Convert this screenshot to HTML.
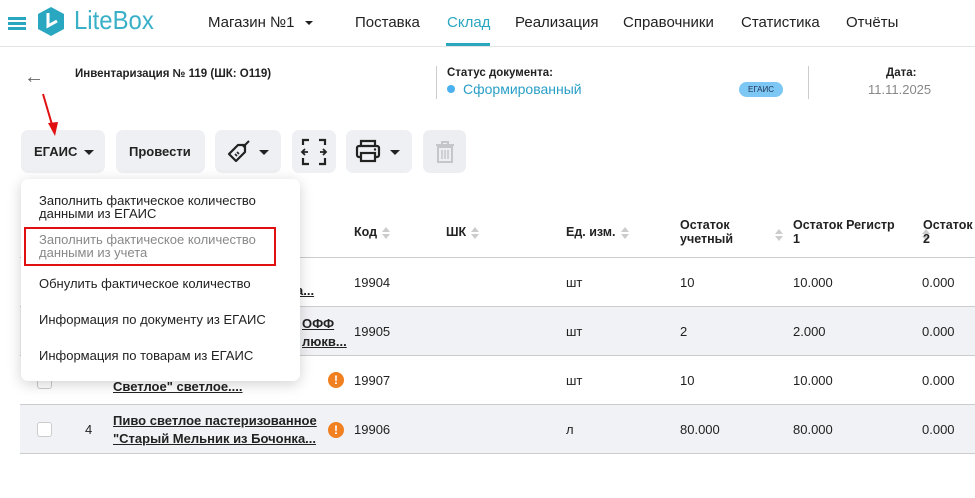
<!DOCTYPE html>
<html><head><meta charset="utf-8">
<style>
*{margin:0;padding:0;box-sizing:border-box}
body{width:975px;height:498px;overflow:hidden;background:#fff;font-family:"Liberation Sans",sans-serif;color:#222;position:relative}
.a{position:absolute;white-space:nowrap}
.nav{font-size:15px;top:14px;color:#222}
.btn{position:absolute;top:130px;height:43px;background:#eef0f3;border-radius:7px}
.caret{display:inline-block;width:0;height:0;border-left:5px solid transparent;border-right:5px solid transparent;border-top:5px solid #222;vertical-align:middle}
.th{font-size:12.5px;font-weight:bold;color:#222;position:absolute}
.sort{display:inline-block;width:8px;height:12px;position:relative;vertical-align:middle;margin-left:5px}
.sort:before{content:"";position:absolute;top:0;left:0;border-left:4px solid transparent;border-right:4px solid transparent;border-bottom:5px solid #ccc}
.sort:after{content:"";position:absolute;bottom:0;left:0;border-left:4px solid transparent;border-right:4px solid transparent;border-top:5px solid #ccc}
.row{position:absolute;left:20px;width:955px;height:49px;border-bottom:1px solid #ccc}
.td{position:absolute;font-size:13px;color:#222}
.name{position:absolute;left:113px;font-size:13px;font-weight:bold;text-decoration:underline;line-height:18px;color:#222}
.ex{position:absolute;left:328px;width:16px;height:16px;border-radius:50%;background:#f08020;color:#fff;font-weight:bold;font-size:12px;text-align:center;line-height:16px}
.cb{position:absolute;left:37px;width:15px;height:15px;border:1px solid #ccc;border-radius:3px;background:#fff}
.mi{position:absolute;left:39px;font-size:13px;color:#222;line-height:13px}
</style></head><body>
<div class="a" style="left:8px;top:17px;width:18px;height:3px;background:#2aa7c0;box-shadow:0 5px 0 #2aa7c0,0 10px 0 #2aa7c0"></div>
<svg class="a" style="left:36px;top:6px" width="30" height="31" viewBox="0 0 30 31"><path d="M15 1 L28 8 L28 23 L15 30 L2 23 L2 8 Z" fill="#2aa7c0"/><path d="M12 7 L12 20 L21 15" fill="none" stroke="#fff" stroke-width="3"/></svg>
<div class="a" style="left:74px;top:5px;font-size:26px;color:#3ab0c8;transform:scaleX(0.92);transform-origin:left">LiteBox</div>
<div class="a nav" style="left:208px">Магазин №1 <span class="caret" style="margin-left:6px;border-width:4px 4px 0"></span></div>
<div class="a nav" style="left:355px">Поставка</div>
<div class="a nav" style="left:447px;color:#2aa7c0">Склад</div>
<div class="a" style="left:446px;top:43px;width:44px;height:3px;background:#2aa7c0"></div>
<div class="a nav" style="left:515px">Реализация</div>
<div class="a nav" style="left:623px">Справочники</div>
<div class="a nav" style="left:741px">Статистика</div>
<div class="a nav" style="left:846px">Отчёты</div>
<div class="a" style="left:0;top:46px;width:975px;height:1px;background:#e3e3e3"></div>
<div class="a" style="left:24px;top:66px;font-size:20px;color:#666">&#8592;</div>
<div class="a" style="left:75px;top:68px;font-size:11.5px;font-weight:bold">Инвентаризация № 119 (ШК: О119)</div>
<div class="a" style="left:436px;top:66px;width:1px;height:33px;background:#ccc"></div>
<div class="a" style="left:447px;top:67px;font-size:11.5px;font-weight:bold">Статус документа:</div>
<div class="a" style="left:447px;top:85px;width:8px;height:8px;border-radius:50%;background:#4ab0ef"></div>
<div class="a" style="left:463px;top:81px;font-size:14px;color:#2a9fc6">Сформированный</div>
<div class="a" style="left:739px;top:82px;width:44px;height:15px;border-radius:8px;background:#7cc7f3;font-size:8px;color:#235;text-align:center;line-height:15px">ЕГАИС</div>
<div class="a" style="left:808px;top:66px;width:1px;height:33px;background:#ccc"></div>
<div class="a" style="left:886px;top:67px;font-size:11.5px;font-weight:bold">Дата:</div>
<div class="a" style="left:868px;top:82px;font-size:13px;color:#888">11.11.2025</div>
<div class="btn" style="left:21px;width:84px"><span class="a" style="left:13px;top:14px;font-size:13px;font-weight:bold">ЕГАИС</span><span class="caret a" style="left:63px;top:20px"></span></div>
<div class="btn" style="left:116px;width:89px"><span class="a" style="left:13px;top:14px;font-size:13px;font-weight:bold">Провести</span></div>
<div class="btn" style="left:215px;width:66px"><svg class="a" style="left:10px;top:9px" width="26" height="26" viewBox="0 0 26 26"><path d="M4 15 L13 6 L20 6 L20 13 L11 22 Z" fill="none" stroke="#222" stroke-width="2.2" stroke-linejoin="round"/><path d="M18 8 L24 2" stroke="#222" stroke-width="2"/><path d="M10 15 L12 17 M12 13 L14 15" stroke="#222" stroke-width="1.6"/></svg><span class="caret a" style="left:44px;top:20px"></span></div>
<div class="btn" style="left:292px;width:44px"><svg class="a" style="left:8px;top:7px" width="28" height="30" viewBox="0 0 28 30"><path d="M3 8 V3 H9 M19 3 H25 V8 M3 21 V27 H9 M19 27 H25 V21" fill="none" stroke="#222" stroke-width="2.2"/><path d="M2 15 H8 M5 12 L2 15 L5 18 M26 15 H20 M23 12 L26 15 L23 18" fill="none" stroke="#222" stroke-width="1.8"/></svg></div>
<div class="btn" style="left:346px;width:66px"><svg class="a" style="left:9px;top:9px" width="26" height="24" viewBox="0 0 26 24"><path d="M6 6 V2 H20 V6" fill="none" stroke="#222" stroke-width="2.2"/><rect x="2" y="7" width="22" height="11" rx="2" fill="none" stroke="#222" stroke-width="2.2"/><rect x="6" y="14" width="14" height="8" fill="#eef0f3" stroke="#222" stroke-width="2.2"/><circle cx="20" cy="10.5" r="1.2" fill="#222"/></svg><span class="caret a" style="left:44px;top:20px"></span></div>
<div class="btn" style="left:423px;width:43px;background:#eceef1"><svg class="a" style="left:12px;top:11px" width="20" height="22" viewBox="0 0 20 22"><path d="M1 4 H19 M7 4 V1 H13 V4" fill="none" stroke="#c4c6ca" stroke-width="2"/><rect x="3" y="6" width="14" height="15" fill="none" stroke="#c4c6ca" stroke-width="2"/><path d="M7 9 V18 M10 9 V18 M13 9 V18" stroke="#c4c6ca" stroke-width="1.5"/></svg></div>
<svg class="a" style="left:38px;top:92px" width="24" height="48"><line x1="5" y1="2" x2="15" y2="36" stroke="#e01010" stroke-width="2"/><path d="M10 31 L17 44 L20 30 Z" fill="#e01010"/></svg>
<div class="th" style="left:354px;top:225px">Код<span class="sort"></span></div>
<div class="th" style="left:446px;top:225px">ШК<span class="sort"></span></div>
<div class="th" style="left:566px;top:225px">Ед. изм.<span class="sort"></span></div>
<div class="th" style="left:680px;top:218px;line-height:14px">Остаток<br>учетный</div>
<div class="a sort" style="left:770px;top:226px"></div>
<div class="th" style="left:793px;top:218px;line-height:14px">Остаток Регистр<br>1</div>
<div class="a sort" style="left:900px;top:226px"></div>
<div class="th" style="left:923px;top:218px;line-height:14px">Остаток<br>2</div>
<div class="a" style="left:20px;top:257px;width:955px;height:1px;background:#ccc"></div>
<div class="row" style="top:258px;background:#fff"><span class="name" style="top:24px;left:276px">а...</span><span class="td" style="left:334px;top:17px">19904</span><span class="td" style="left:546px;top:17px">шт</span><span class="td" style="left:660px;top:17px">10</span><span class="td" style="left:773px;top:17px">10.000</span><span class="td" style="left:902px;top:17px">0.000</span></div>
<div class="row" style="top:307px;background:#f1f2f5"><span class="name" style="top:8px;left:282px">ОФФ<br>люкв...</span><span class="td" style="left:334px;top:17px">19905</span><span class="td" style="left:546px;top:17px">шт</span><span class="td" style="left:660px;top:17px">2</span><span class="td" style="left:773px;top:17px">2.000</span><span class="td" style="left:902px;top:17px">0.000</span></div>
<div class="row" style="top:356px;background:#fff"><span class="cb" style="left:17px;top:18px"></span><span class="name" style="top:22px;left:93px">Светлое" светлое....</span><span class="ex" style="left:308px;top:16px">!</span><span class="td" style="left:334px;top:17px">19907</span><span class="td" style="left:546px;top:17px">шт</span><span class="td" style="left:660px;top:17px">10</span><span class="td" style="left:773px;top:17px">10.000</span><span class="td" style="left:902px;top:17px">0.000</span></div>
<div class="row" style="top:405px;background:#f1f2f5"><span class="cb" style="left:17px;top:17px"></span><span class="td" style="left:65px;top:17px">4</span><span class="name" style="top:7px;left:93px">Пиво светлое пастеризованное<br>"Старый Мельник из Бочонка...</span><span class="ex" style="left:308px;top:17px">!</span><span class="td" style="left:334px;top:17px">19906</span><span class="td" style="left:546px;top:17px">л</span><span class="td" style="left:660px;top:17px">80.000</span><span class="td" style="left:773px;top:17px">80.000</span><span class="td" style="left:902px;top:17px">0.000</span></div>
<div class="a" style="left:21px;top:179px;width:279px;height:202px;background:#fff;border-radius:7px;box-shadow:0 3px 14px rgba(0,0,0,0.18)"></div>
<div class="mi" style="top:194px">Заполнить фактическое количество<br>данными из ЕГАИС</div>
<div class="a" style="left:24px;top:227px;width:252px;height:39px;border:2px solid #e01010"></div>
<div class="mi" style="top:233px;color:#888">Заполнить фактическое количество<br>данными из учета</div>
<div class="mi" style="top:277px">Обнулить фактическое количество</div>
<div class="mi" style="top:313px">Информация по документу из ЕГАИС</div>
<div class="mi" style="top:349px">Информация по товарам из ЕГАИС</div>
</body></html>
